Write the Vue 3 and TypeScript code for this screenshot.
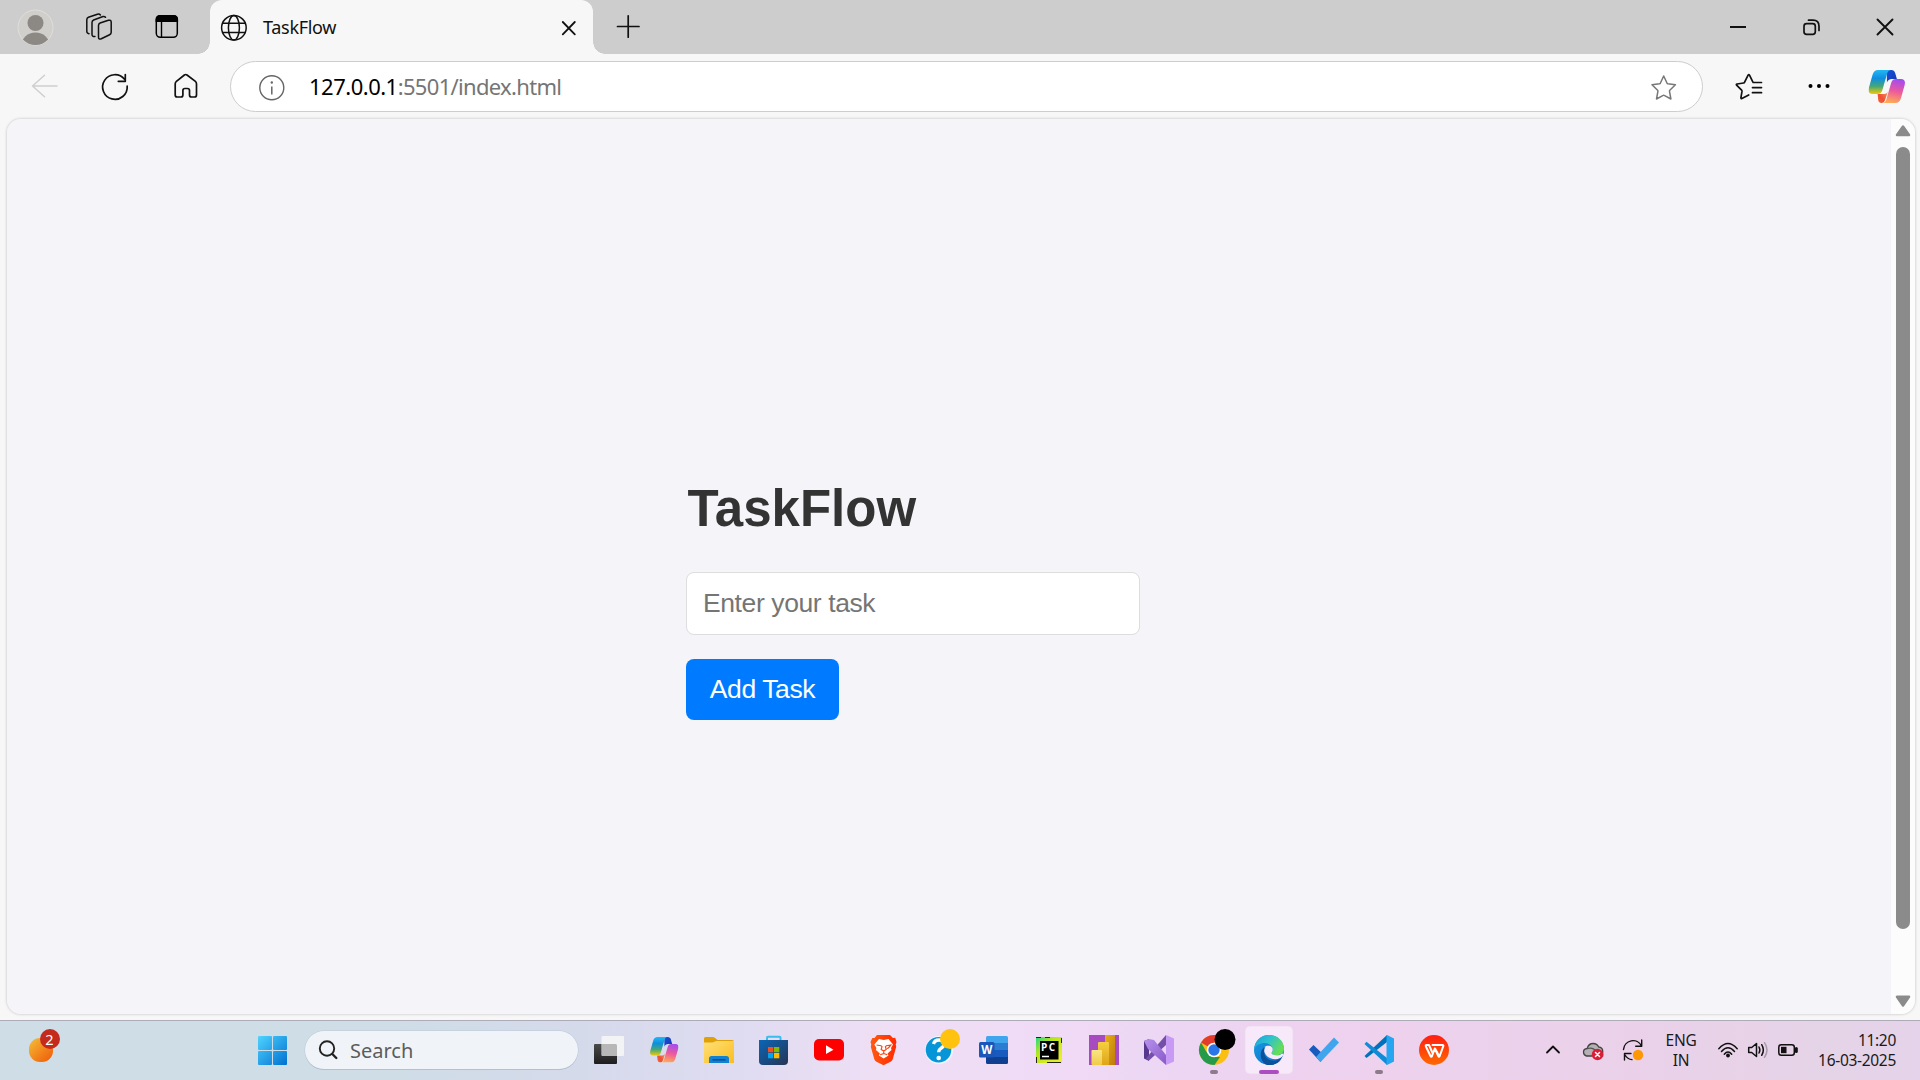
<script setup lang="ts">
import { ref } from 'vue'

const tabTitle = 'TaskFlow'
const host = '127.0.0.1'
const path = ':5501/index.html'
const task = ref('')
</script>

<template>
  <div class="screen">
    <svg class="defs" width="0" height="0" aria-hidden="true">
      <defs>
        <linearGradient id="cpBlue" x1="0" y1="0" x2="0" y2="1">
          <stop offset="0" stop-color="#22b8f4" /><stop offset=".35" stop-color="#0f8ddf" /><stop offset=".68" stop-color="#44a878" /><stop offset="1" stop-color="#f5c900" />
        </linearGradient>
        <linearGradient id="cpPink" x1=".6" y1="0" x2=".4" y2="1">
          <stop offset="0" stop-color="#a34cf0" /><stop offset=".5" stop-color="#ec5a9c" /><stop offset="1" stop-color="#ffac55" />
        </linearGradient>
        <linearGradient id="cpNavy" x1="0" y1="0" x2="1" y2="1">
          <stop offset="0" stop-color="#1a50d8" /><stop offset="1" stop-color="#1238b4" />
        </linearGradient>
        <linearGradient id="cpRed" x1="1" y1="0" x2="0" y2="1">
          <stop offset="0" stop-color="#f8a05a" /><stop offset=".6" stop-color="#ee4f35" /><stop offset="1" stop-color="#f06a30" />
        </linearGradient>
        <symbol id="copilot" viewBox="0 0 36 33" preserveAspectRatio="none">
          <path d="M18 0h4.500c2 0 3.200 1.200 3.800 3L28 9h-5c-2.500 0-4 1.200-4.800 3.600z" fill="url(#cpNavy)" />
          <path d="M9 24h6.500c2 0 3.400-1.500 4-3.500l-3.200 9.500c-.7 2-1.800 3-3.600 3-1.700 0-2.600-1-3.100-2.800z" fill="url(#cpRed)" />
          <path d="M9.500 0H22c-2 .3-3 1.500-3.600 3.500L13.700 20c-.8 2.700-2.200 4-4.700 4H4c-3.500 0-4.600-2.500-3.600-6.200L4 4.800C4.900 1.600 6.500 0 9.500 0z" fill="url(#cpBlue)" />
          <path d="M26.500 33H14c2-.3 3-1.500 3.600-3.500L22.300 13c.8-2.700 2.200-4 4.700-4h5c3.500 0 4.600 2.500 3.600 6.200l-3.600 13c-.9 3.200-2.500 4.800-5.500 4.800z" fill="url(#cpPink)" />
        </symbol>
        <linearGradient id="sun" x1="0" y1="0" x2="1" y2="1"><stop offset="0" stop-color="#f3c13a" /><stop offset=".6" stop-color="#f27f18" /><stop offset="1" stop-color="#ee5a0a" /></linearGradient>
        <linearGradient id="win" gradientUnits="userSpaceOnUse" x1="258" y1="1036" x2="287" y2="1065"><stop offset="0" stop-color="#4fd4ff" /><stop offset="1" stop-color="#0070d0" /></linearGradient>
        <linearGradient id="dark" x1="0" y1="0" x2="0" y2="1"><stop offset="0" stop-color="#4a4a4a" /><stop offset="1" stop-color="#1d1d1d" /></linearGradient>
        <linearGradient id="folder" x1="0" y1="0" x2="1" y2="1"><stop offset="0" stop-color="#ffe07a" /><stop offset="1" stop-color="#fbbd1d" /></linearGradient>
        <linearGradient id="store" x1="0" y1="0" x2="1" y2="1"><stop offset="0" stop-color="#0a66b5" /><stop offset="1" stop-color="#263455" /></linearGradient>
        <linearGradient id="brave" x1="0" y1="0" x2="1" y2="0"><stop offset="0" stop-color="#ff5a14" /><stop offset="1" stop-color="#ff2a00" /></linearGradient>
        <linearGradient id="pc" x1="0" y1="0" x2="1" y2="1"><stop offset="0" stop-color="#21d789" /><stop offset=".35" stop-color="#b5e61d" /><stop offset="1" stop-color="#f5ee2e" /></linearGradient>
        <linearGradient id="gold" x1="0" y1="0" x2="1" y2="1"><stop offset="0" stop-color="#e8b016" /><stop offset="1" stop-color="#bf7a0b" /></linearGradient>
        <linearGradient id="gold2" x1="0" y1="0" x2="0" y2="1"><stop offset="0" stop-color="#f5cf40" /><stop offset="1" stop-color="#e0a418" /></linearGradient>
        <linearGradient id="gold3" x1="0" y1="0" x2="0" y2="1"><stop offset="0" stop-color="#fae584" /><stop offset="1" stop-color="#f1cb48" /></linearGradient>
        <linearGradient id="vs" x1="0" y1="0" x2="1" y2="1"><stop offset="0" stop-color="#b893ee" /><stop offset="1" stop-color="#8858c8" /></linearGradient>
        <linearGradient id="edgeTop" x1="0" y1="0" x2="1" y2=".5"><stop offset="0" stop-color="#1ba0dc" /><stop offset=".5" stop-color="#2fc2cf" /><stop offset="1" stop-color="#66dd55" /></linearGradient>
        <linearGradient id="edgeLeft" x1="0" y1="0" x2="1" y2="1"><stop offset="0" stop-color="#1a9be4" /><stop offset="1" stop-color="#0a6cc8" /></linearGradient>
        <linearGradient id="wps" x1="0" y1="0" x2="0" y2="1"><stop offset="0" stop-color="#ff1d12" /><stop offset="1" stop-color="#ff6a00" /></linearGradient>
      </defs>
    </svg>

    <header class="tabbar">
      <svg width="66" height="54" viewBox="0 0 66 54">
        <clipPath id="av"><circle cx="35.500" cy="27.500" r="17.500" /></clipPath>
        <circle cx="35.500" cy="27.500" r="17.500" fill="#d1cfcb" stroke="#e0dfdc" />
        <g clip-path="url(#av)" fill="#8c8884"><circle cx="35.500" cy="23" r="8" /><ellipse cx="35.500" cy="45" rx="14" ry="12.500" /></g>
      </svg>
      <svg width="66" height="54" viewBox="66 0 66 54" class="line">
        <path d="M98.500 25.500q0-1.800 1.600-2.500l8.300-2.700q2.800-.7 2.800 2v10q0 1.800-1.600 2.500l-8.300 4q-2.800 1-2.800-1.600z" />
        <path d="M95 36.400q-3 .3-3-2V22.500q0-1.800 1.600-2.500l9.400-3.500q1.600-.3 2.500 .8" />
        <path d="M89 33.700q-2.200-.5-2.200-2.500V19.700q0-1.800 1.600-2.500l9-3q2-.5 3 .8" />
      </svg>
      <svg width="78" height="54" viewBox="132 0 78 54">
        <rect x="156.300" y="15.700" width="21" height="21.600" rx="4" fill="none" stroke="#000" stroke-width="1.500" />
        <path d="M155.600 22v-2.500q0-4.500 4.500-4.500h13.500q4.500 0 4.500 4.500V22z" /><path d="M161.500 22v15" stroke="#000" stroke-width="1.400" />
      </svg>
      <div class="tab">
        <svg width="53" height="54" viewBox="210 0 53 54" class="line">
          <circle cx="233.900" cy="27.800" r="12.300" /><ellipse cx="233.900" cy="27.800" rx="5.500" ry="12.300" /><path d="M222.800 23.300H245M222.800 32.400H245" />
        </svg>
        <span class="tab-title">{{ tabTitle }}</span>
        <svg width="50" height="54" viewBox="543 0 50 54" class="line"><path d="M562.800 22l12 12.300M574.800 22L562.800 34.300" stroke-width="1.800" /></svg>
      </div>
      <svg width="70" height="54" viewBox="593 0 70 54" class="line"><path d="M617.500 26.500h21.500M628.200 15.800v21.400" stroke-width="1.700" /></svg>
      <span class="grow"></span>
      <svg width="220" height="54" viewBox="1700 0 220 54" class="line">
        <path d="M1730 27h16" stroke-width="2" stroke-linecap="butt" />
        <g stroke-width="1.700"><rect x="1804" y="23.700" width="11.300" height="10.600" rx="2.600" /><path d="M1808.500 20.200h4.500q6 0 6 6v4.300" /></g>
        <path d="M1877.500 19.500l15 15M1892.500 19.500l-15 15" stroke-width="1.900" />
      </svg>
    </header>

    <nav class="toolbar">
      <svg width="80" height="64" viewBox="0 54 80 64" class="line"><path stroke="#cfcfcf" d="M57 86H32.500M44.500 75.300L32.500 86l12 10.700" /></svg>
      <svg width="70" height="64" viewBox="80 54 70 64" class="line"><path d="M127.200 86.200A12.300 12.300 0 1 1 124.500 79.300M125.300 74.500v6.800h-7" stroke-width="1.700" /></svg>
      <svg width="80" height="64" viewBox="150 54 80 64" class="line"><path d="M175.200 84q0-1.600 1.200-2.600l8-6.400q1.300-1 2.600 0l8.400 6.400q1.100 1 1.100 2.600v11q0 2-2 2h-3q-2 0-2-2v-4.500q0-2-2-2h-2.600q-2 0-2 2V95q0 2-2 2h-3.700q-2 0-2-2z" stroke-width="1.700" /></svg>
      <div class="address">
        <svg width="78" height="48" viewBox="231 62 78 48"><circle cx="271.800" cy="86.700" r="12" fill="none" stroke="#666" stroke-width="1.400" /><path d="M271.800 85.500v8" stroke="#666" stroke-width="1.500" /><circle cx="271.800" cy="81.500" r="1.200" fill="#666" /></svg>
        <span class="url"><b>{{ host }}</b>{{ path }}</span>
        <span class="grow"></span>
        <svg width="62" height="48" viewBox="1640 62.500 62 48" class="line"><path stroke="#777" d="M1663.700 75.500l3.400 7.300q.2.400.8.500l7.500 1-5.600 5.500q-.4.400-.3 1l1.400 7.700-6.700-3.600q-.5-.3-1 0l-6.700 3.600 1.400-7.700q.1-.6-.3-1l-5.600-5.500 7.500-1q.6-.1.800-.5z" /></svg>
      </div>
      <svg width="157" height="64" viewBox="1703 54 157 64" class="line">
        <path d="M1761.500 82.500h-7.700q-.7 0-1-.7l-3.300-6.600q-.7-1-1.400 0l-3.500 7q-.3.700-1 .8l-6.500 1q-1.200.3-.5 1.200l5 5q.5.500.4 1.200l-1.100 6.400q0 1.100 1 .7l6.800-3.600M1752.500 87.600h9M1752.500 92.700h9" stroke-width="1.700" />
        <g fill="#000" stroke="none"><circle cx="1810.500" cy="86" r="2" /><circle cx="1819" cy="86" r="2" /><circle cx="1827.500" cy="86" r="2" /></g>
      </svg>
      <svg width="60" height="64" viewBox="1860 54 60 64"><use href="#copilot" x="1868.500" y="70" width="36.500" height="33" /></svg>
    </nav>

    <div class="frame">
      <main class="page">
        <div class="app">
          <h1>TaskFlow</h1>
          <input v-model="task" type="text" placeholder="Enter your task" />
          <button type="button">Add Task</button>
        </div>
      </main>
      <div class="scroll">
        <svg width="24" height="22" viewBox="1891 119 24 22"><path d="M1903 126.500l6 8.500h-12z" fill="#8b8b8b" stroke="#8b8b8b" stroke-width="2.500" stroke-linejoin="round" /></svg>
        <div class="thumb"></div>
        <svg width="24" height="24" viewBox="1891 990 24 24"><path d="M1903 1005.500l-6-8.700h12z" fill="#8b8b8b" stroke="#8b8b8b" stroke-width="2.500" stroke-linejoin="round" /></svg>
      </div>
    </div>

    <footer class="taskbar">
      <div class="weather">
        <svg width="60" height="59" viewBox="0 1021 60 59"><rect x="29" y="1038" width="24" height="24" rx="11" fill="url(#sun)" /></svg>
        <span class="badge">2</span>
      </div>
      <svg width="105" height="59" viewBox="200 1021 105 59"><g fill="url(#win)"><rect x="258" y="1036" width="14" height="14" rx="1" /><rect x="273" y="1036" width="14" height="14" rx="1" /><rect x="258" y="1051" width="14" height="14" rx="1" /><rect x="273" y="1051" width="14" height="14" rx="1" /></g></svg>
      <div class="search">
        <svg width="45" height="38" viewBox="305 1031.500 45 38"><circle cx="327" cy="1049" r="7.200" fill="none" stroke="#222" stroke-width="1.900" /><path d="M332.300 1054.500l4 4" stroke="#222" stroke-width="2.400" stroke-linecap="round" /></svg>
        <span>Search</span>
      </div>

      <div class="apps">
        <svg width="55" height="59" viewBox="581 1021 55 59"><rect x="594" y="1044" width="23" height="20" rx="1" fill="url(#dark)" /><rect x="601.500" y="1036" width="22.500" height="20" rx="1" fill="#f4f4f4" opacity=".93" /><path d="M602 1044h13.500q1.500 0 1.500 1.500V1056h-15z" fill="#b7b7b7" /></svg>
        <svg width="55" height="59" viewBox="636 1021 55 59"><use href="#copilot" x="650" y="1037" width="28.500" height="25.500" /></svg>
        <svg width="55" height="59" viewBox="691 1021 55 59"><path d="M704 1038.500q0-1.500 1.500-1.500h7.500q1 0 1.800.7l2.700 2.300H732q2 0 2 2v4h-30z" fill="#e0a008" /><path d="M704 1042.500h8q1.500 0 2.500-.7l1-.6q.7-.3 1.500-.3h17V1063h-30z" fill="url(#folder)" /><path d="M709 1063v-4.500q0-2.500 2.500-2.500h15q2.500 0 2.500 2.500v4.500z" fill="#1181d4" /><path d="M712.500 1059.800h13" stroke="#0a4d8e" stroke-width="1.500" /></svg>
        <svg width="55" height="59" viewBox="746 1021 55 59"><path d="M767 1041v-3.200q0-1 1-1h11.500q1 0 1 1v3.200" fill="none" stroke="#37bdee" stroke-width="2" /><path d="M759 1040h29v21q0 4-4 4h-21q-4 0-4-4z" fill="url(#store)" /><path d="M768 1047h5.300v5.300H768z" fill="#f25022" /><path d="M774 1047h5.300v5.300H774z" fill="#7fba00" /><path d="M768 1053h5.300v5.300H768z" fill="#00a4ef" /><path d="M774 1053h5.300v5.300H774z" fill="#ffb900" /></svg>
        <svg width="55" height="59" viewBox="801 1021 55 59"><rect x="814" y="1039" width="30" height="21.500" rx="5" fill="#f00" /><path d="M826 1045.300l7.500 4.400-7.500 4.400z" fill="#fff" /></svg>
        <svg width="55" height="59" viewBox="856 1021 55 59"><path d="M877 1035h13l3 3 2.200-.3 1.300 4.300-.8 2.500.5 2.300-3.500 12.500q-.5 1.500-1.700 2.300l-7.500 3.600-7.500-3.600q-1.200-.8-1.700-2.300l-3.500-12.500.5-2.300-.8-2.500 1.800-4 2.200 0z" fill="url(#brave)" /><path d="M879 1039l4.700 1 4.800-1 4.500 5.500-2 3.500.5 2-4 3.500 1 2-4.800 3-4.800-3 1-2-4-3.500.5-2-2-3.500z" fill="#fff" /><path d="M876.500 1045l4.500.7 1 1-.8 2.700 2.500 1.600 2.500-1.600-.8-2.700 1-1 4.500-.7-2.500 3-1.500.5M883.700 1051v2.500l-3.500 1.300M883.700 1053.500l3.500 1.300" fill="none" stroke="#ff4310" stroke-width="1.200" /></svg>
        <svg width="55" height="59" viewBox="911 1021 55 59"><circle cx="939" cy="1050" r="14" fill="#eef7fc" /><circle cx="938.500" cy="1049.800" r="12.800" fill="#0696d7" /><path d="M933.500 1044q1-4 5.500-4 5 0 5 4 0 2.600-3 4.300-2.300 1.400-2.300 4" fill="none" stroke="#fff" stroke-width="3.300" /><circle cx="938.700" cy="1058" r="2.300" fill="#fff" /><circle cx="950" cy="1039" r="10" fill="#ffc20e" /></svg>
        <svg width="55" height="59" viewBox="966 1021 55 59"><path d="M986 1037.500q0-1.500 1.500-1.500h19q1.500 0 1.500 1.500v6h-22z" fill="#41a5ee" /><path d="M986 1043h22v7h-22z" fill="#2b7cd3" /><path d="M986 1050h22v7h-22z" fill="#185abd" /><path d="M986 1057h22v5.500q0 1.500-1.500 1.500h-19q-1.500 0-1.500-1.500z" fill="#103f91" /><rect x="979" y="1042" width="15.500" height="15.500" rx="1.500" fill="#1b57b8" /><text x="986.700" y="1054" text-anchor="middle" class="glyph" font-size="11.500">W</text></svg>
        <svg width="55" height="59" viewBox="1021 1021 55 59"><path d="M1036 1037h26v26h-26z" fill="url(#pc)" /><path d="M1036 1037.500h5M1045 1037.500h5M1061.500 1043v-5M1047 1062.500h14M1036.500 1063v-6" stroke="#222" /><rect x="1040" y="1041" width="18.500" height="18.500" fill="#000" /><text x="1041" y="1050.500" class="glyph" font-size="10" textLength="14">PC</text><path d="M1042 1056.500h7" stroke="#fff" stroke-width="1.500" /></svg>
        <svg width="55" height="59" viewBox="1076 1021 55 59"><path d="M1089 1035h30v30h-30z" fill="#a64cc0" /><path d="M1105 1035h10v30h-10z" fill="url(#gold)" /><rect x="1098" y="1042" width="11" height="23" rx="1" fill="url(#gold2)" /><rect x="1091.500" y="1050" width="10.500" height="15" rx="1" fill="url(#gold3)" /></svg>
        <svg width="55" height="59" viewBox="1131 1021 55 59"><path d="M1144 1041l5-2v22l-5-2.500z" fill="#56388c" /><path d="M1149 1060.500l17-15.500v-10l-16 18.500-4 5z" fill="#7550a8" /><path d="M1149 1039l5 1 12 15v10l-18-16-4-8z" fill="url(#vs)" /><path d="M1166 1035l8 3.500v23l-8 3.500z" fill="#c79bf5" /></svg>
        <svg width="55" height="59" viewBox="1186 1021 55 59"><circle cx="1214" cy="1050" r="15" fill="#fbbf12" /><path d="M1214 1050l-13-7.500A15 15 0 0 1 1227 1042.500h-13z" fill="#e33b2e" /><path d="M1201 1042.500l6.500 11.300 6.500 3.700-7 0 7 7.500A15 15 0 0 1 1201 1042.500z" fill="#259a48" /><path d="M1206 1052l8 5h6l-5.500 8h-.5l-8-4z" fill="#259a48" /><circle cx="1214" cy="1050" r="7.300" fill="#fff" /><circle cx="1214" cy="1050" r="5.700" fill="#2a76e8" /><circle cx="1225" cy="1039.500" r="10.500" /><rect x="1210" y="1070" width="8" height="4" rx="2" fill="#8b7b8b" /></svg>
        <svg width="55" height="59" viewBox="1241 1021 55 59"><rect x="1245" y="1026" width="48" height="48" rx="5" fill="#f7e9f9" stroke="#e9daed" stroke-width=".7" /><circle cx="1269" cy="1050" r="15" fill="url(#edgeLeft)" /><path d="M1254.100 1049C1255 1040.500 1261 1035 1269 1035c9 0 15 6.500 15 13.500 0 4-3 6.800-7.500 6.800-3.500 0-5-1.300-5-2.300 0-.8 1.200-1.200 1.200-3.500 0-3-3-6.500-8-6.500-5 0-8.700 2.500-10.600 6z" fill="url(#edgeTop)" /><path d="M1264.500 1047c-3.500 5-1 12 5 15 4.500 2 9 0 11.800-2.500A15 15 0 0 1 1269 1065c-8 0-11.500-13.500-4.500-18z" fill="#0b509c" /><path d="M1264.500 1047c2.500-2.300 8.500-1.500 8.200 2.500 0 2.300-1.200 2.700-1.200 3.500 0 1 1.500 2.300 5 2.300 2.700 0 4-.5 5.800-1.800 1.500-.3 1.200 1.200.5 2.300-2 3-7.300 4.500-12.300 2.500-5-2-8-7.500-6-11.300z" fill="#f7e9f9" /><path d="M1265.500 1046.500c-3.500 6 0 13 6 14 4 .7 8-1 10.500-3.500-2 5-7 8-13 8-7-1-10.500-14-3.500-18.500z" fill="#0d519d" /><rect x="1259" y="1070" width="20" height="4" rx="2" fill="#ad4dc1" /></svg>
        <svg width="55" height="59" viewBox="1296 1021 55 59"><path d="M1309 1049.500l4.500-4.500 11.500 11-4.500 6z" fill="#195abd" /><path d="M1316 1057l18-19.500 5 5-18.500 19.500z" fill="#41a5ee" /></svg>
        <svg width="55" height="59" viewBox="1351 1021 55 59"><path d="M1364.500 1056l2 2 20.500-16v-7z" fill="#0072bc" /><path d="M1364.500 1044l2-2.200L1387 1058v7z" fill="#108bd6" /><path d="M1387 1035l7 3.500v23l-7 3.500q-.5 0-.5-1v-28z" fill="#26a5f0" /><rect x="1375" y="1070" width="8" height="4" rx="2" fill="#8b7b8b" /></svg>
        <svg width="55" height="59" viewBox="1406 1021 55 59"><circle cx="1434" cy="1050" r="15" fill="url(#wps)" /><path d="M1432.500 1045h10q1.200 0 .8 1.200l-3.600 9.800q-.7 1.500-1.400 0l-3.500-7.500-2.800 7.500q-.7 1.500-1.500 0l-4.700-9.800q-.5-1.200.7-1.200h2.500l3.800 8.500M1435 1048.500l3.800 7" fill="none" stroke="#fff" stroke-width="2" stroke-linejoin="round" stroke-linecap="round" /></svg>
      </div>
      <span class="grow"></span>
      <svg width="130" height="59" viewBox="1530 1021 130 59" class="line">
        <path d="M1547 1052.500l6-6 6 6" stroke-width="1.800" />
        <path d="M1586.500 1056q-3-.7-3-4 0-3.200 3.700-3.500 1.300-5 6-5 3.800 0 5.500 3.500 3.800.5 4 4v5z" fill="#b4b0b4" stroke="#444" stroke-width="1.300" /><path d="M1588 1048.500q5-1.500 9 3.500" stroke="#555" stroke-width="1.300" />
        <circle cx="1597.500" cy="1054.500" r="5.700" fill="#d91f36" stroke="none" /><path d="M1595.500 1052.500l4 4M1599.500 1052.500l-4 4" stroke="#fff" stroke-width="1.500" />
        <path d="M1623.500 1049.500a9.500 9.500 0 0 1 18-3.500M1641.700 1040v6.200h-6M1624.500 1060v-6.500h6.500M1625 1055q2.500 4.300 7 4.600" stroke-width="1.400" /><circle cx="1638" cy="1055" r="5.200" fill="#ff9705" stroke="none" />
      </svg>
      <div class="lang"><span>ENG</span><span>IN</span></div>
      <svg width="102" height="59" viewBox="1702 1021 102 59" class="line">
        <path d="M1718.800 1048.800q9.200-10.500 18.400 0M1721.500 1051.500q6.500-7.500 13 0M1724.300 1054.200q3.700-4.200 7.400 0" /><circle cx="1728" cy="1055.500" r="1.900" fill="#111" stroke="none" />
        <path d="M1748.700 1047.500h3l4.800-4v13l-4.800-4h-3z" /><path d="M1759 1047q1.700 3 0 6M1761.700 1044.700q3.300 5.300 0 10.600" /><path d="M1764.500 1042.700q5 7.300 0 14.600" stroke="#a99aab" />
        <rect x="1778.800" y="1044.700" width="15.500" height="10.600" rx="2.500" /><rect x="1781" y="1046.800" width="5.500" height="6.400" fill="#111" stroke="none" /><path d="M1796.300 1048.500v3" stroke-width="3" />
      </svg>
      <div class="clock"><span>11:20</span><span>16-03-2025</span></div>
    </footer>
  </div>
</template>

<style>
html,
body {
  margin: 0;
  overflow: hidden;
}
</style>

<style scoped>
.screen {
  width: 1920px;
  height: 1080px;
  display: flex;
  flex-direction: column;
  background: #f7f7f7;
  overflow: hidden;
  font-family: "Noto Sans", "Open Sans", sans-serif;
  box-sizing: border-box;
}
.screen svg { display: block; flex: none; }
.screen .defs { position: absolute; }
.line { fill: none; stroke: #111; stroke-width: 1.5; stroke-linecap: round; stroke-linejoin: round; }
.grow { flex: 1; }
.glyph { fill: #fff; font-family: "Open Sans", sans-serif; font-weight: 700; }
.tabbar { display: flex; height: 54px; flex: none; background: #cdcdcd; }
.tab {
  position: relative;
  display: flex;
  align-items: center;
  width: 383px;
  background: #f7f7f7;
  border-radius: 12px 12px 0 0;
}
.tab::before,
.tab::after {
  content: "";
  position: absolute;
  bottom: 0;
  width: 12px;
  height: 12px;
}
.tab::before { left: -12px; background: radial-gradient(circle at 0 0, transparent 11.500px, #f7f7f7 12px); }
.tab::after { right: -12px; background: radial-gradient(circle at 100% 0, transparent 11.500px, #f7f7f7 12px); }
.tab-title { flex: 1; font-size: 18px; line-height: 24px; letter-spacing: -0.3px; color: #111; }
.toolbar { display: flex; height: 64px; flex: none; }
.address {
  box-sizing: border-box;
  display: flex;
  align-items: center;
  width: 1473px;
  height: 51px;
  margin-top: 7px;
  border: 1px solid #cdcdcd;
  border-radius: 26px;
  background: #fff;
}
.url { font-size: 22px; line-height: 30px; margin-top: -2px; letter-spacing: -0.68px; color: #757575; }
.url b { font-weight: 400; color: #000; letter-spacing: -0.5px; }
.frame {
  display: flex;
  height: 895px;
  flex: none;
  margin: 1px 5px 0 7px;
  border-radius: 14px;
  overflow: hidden;
  box-shadow: 0 0 3px rgba(0, 0, 0, .25);
}
.page { flex: 1; background: #f4f4f9; font-family: "Liberation Sans", Arial, sans-serif; }
.app { display: flex; flex-direction: column; align-items: flex-start; margin: 360px 0 0 679px; }
h1 { margin: 0 0 33px 1.500px; height: 60px; font-size: 51px; line-height: 60px; color: #333; }
input {
  box-sizing: border-box;
  width: 454px;
  height: 63px;
  margin: 0 0 24px;
  padding: 0 16px;
  border: 1px solid #ddd;
  border-radius: 8px;
  background: #fff;
  font: 26.500px "Liberation Sans", Arial, sans-serif;
  letter-spacing: -0.4px;
}
input::placeholder { color: #757575; opacity: 1; }
button {
  width: 153px;
  height: 61px;
  padding: 0;
  border: 0;
  border-radius: 8px;
  background: #007bff;
  color: #fff;
  font: 26.500px "Liberation Sans", Arial, sans-serif;
  letter-spacing: -0.4px;
}
.scroll { display: flex; flex-direction: column; align-items: center; justify-content: space-between; width: 24px; background: #fcfcfc; }
.thumb { width: 14px; height: 782px; margin: 6px 0 auto; border-radius: 7px; background: #8b8b8b; }
.taskbar {
  box-sizing: border-box;
  display: flex;
  height: 60px;
  flex: none;
  margin-top: 6px;
  border-top: 1px solid #aeabb9;
  background: linear-gradient(90deg, #cfdde6 0, #cfdde7 400px, #d5daeb 580px, #dfdcf1 740px, #efdff5 880px, #f0daf5 1080px, #ecd7f4 1150px, #eed2ef 1300px, #ebd1ea 1600px, #e6d3e8 1800px, #e4d3ea 1920px);
}
.weather { position: relative; width: 200px; }
.badge {
  position: absolute;
  left: 39.500px;
  top: 8px;
  width: 20px;
  height: 20px;
  border-radius: 50%;
  background: #c42b1c;
  color: #fff;
  font-size: 14.500px;
  line-height: 20px;
  text-align: center;
}
.search {
  box-sizing: border-box;
  display: flex;
  align-items: center;
  width: 273px;
  height: 38px;
  margin: 10px 1px 0 0;
  border-radius: 19px;
  background: #f0f4f8;
  box-shadow: 0 0 0 .5px #b9c9d6, 0 1px 0 #a9b9c6;
  color: #5c5c5c;
  font-size: 20px;
}
.apps { display: flex; margin-left: 2px; }
.lang,
.clock { display: flex; flex-direction: column; font-size: 15.500px; line-height: 20px; color: #1a1a1a; padding-top: 9px; letter-spacing: -0.3px; }
.lang { width: 42px; align-items: center; }
.clock { width: 92px; align-items: flex-end; margin-right: 24px; }
</style>
